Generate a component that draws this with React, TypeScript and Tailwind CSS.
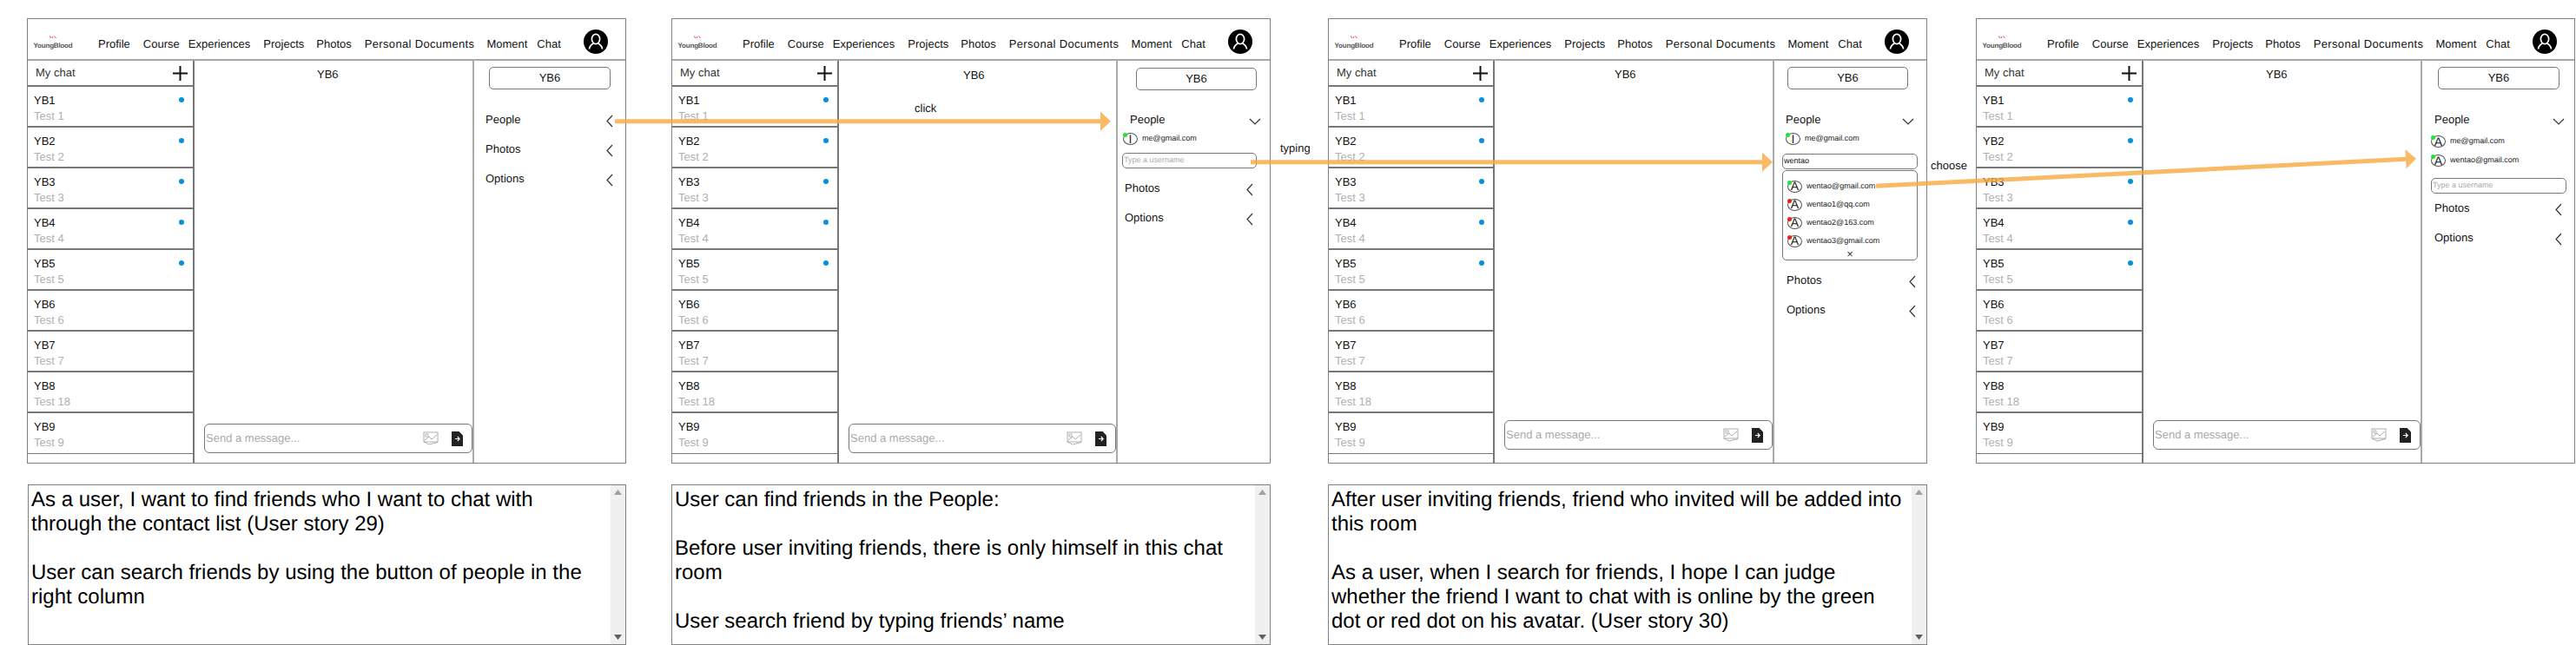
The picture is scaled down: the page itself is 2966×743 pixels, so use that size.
import React from 'react';

const chats = [
  { name: 'YB1', sub: 'Test 1', unread: true },
  { name: 'YB2', sub: 'Test 2', unread: true },
  { name: 'YB3', sub: 'Test 3', unread: true },
  { name: 'YB4', sub: 'Test 4', unread: true },
  { name: 'YB5', sub: 'Test 5', unread: true },
  { name: 'YB6', sub: 'Test 6', unread: false },
  { name: 'YB7', sub: 'Test 7', unread: false },
  { name: 'YB8', sub: 'Test 18', unread: false },
  { name: 'YB9', sub: 'Test 9', unread: false },
];

const ChevronLeft = () => (
  <svg width="8" height="15" viewBox="0 0 8 15" className="mt-[3px]">
    <polyline points="7,1 1,7.5 7,14" fill="none" stroke="#333" strokeWidth="1.2" />
  </svg>
);

const ChevronDown = () => (
  <svg width="14" height="8" viewBox="0 0 14 8" className="mt-[3px]">
    <polyline points="1,1 7,7 13,1" fill="none" stroke="#333" strokeWidth="1.2" />
  </svg>
);

const UserBadge = () => (
  <svg width="28" height="28" viewBox="0 0 28 28" className="mt-[12px] ml-[auto] mr-[20px] shrink-0">
    <circle cx="14" cy="14" r="14" fill="#000" />
    <ellipse cx="14" cy="11" rx="4.6" ry="5.6" fill="none" stroke="#fff" strokeWidth="1.7" />
    <path d="M6.5 22.5 C6.8 19 9 17.3 11.2 16 M21.5 22.5 C21.2 19 19 17.3 16.8 16" fill="none" stroke="#fff" strokeWidth="1.7" />
  </svg>
);

const ImageIcon = () => (
  <svg width="18" height="16" viewBox="0 0 18 16" className="shrink-0">
    <rect x="1" y="1" width="16" height="11" fill="#fff" stroke="#999" strokeWidth="0.8" />
    <rect x="3" y="3" width="3" height="3" fill="none" stroke="#999" strokeWidth="0.7" />
    <polyline points="2,10 7,6 10,9 16,4" fill="none" stroke="#999" strokeWidth="0.8" />
    <path d="M1 12 L7 15 L17 12.5" fill="none" stroke="#999" strokeWidth="0.8" />
  </svg>
);

const SendIcon = () => (
  <svg width="13" height="17" viewBox="0 0 13 17" className="shrink-0">
    <path d="M0 0 H8.5 L13 4.5 V17 H0 Z" fill="#222" />
    <path d="M4 8.5 H9 M6.8 6 L9.2 8.5 L6.8 11" fill="none" stroke="#fff" strokeWidth="1.1" />
  </svg>
);

const Avatar = ({ letter, status }: { letter: string; status: 'green' | 'red' }) => (
  <div className="relative w-[17px] h-[14px] shrink-0 rounded-[50%] border border-[#555] flex items-center justify-center text-[14px] leading-[13px] text-[#222]">
    {letter}
    {status === 'green' ? (
      <span className="absolute left-[-1px] top-[-1px] w-[5px] h-[5px] rounded-full bg-[#22e33a]" />
    ) : (
      <span className="absolute left-[-1px] top-[-1px] w-[5px] h-[5px] rounded-full bg-[#e0251b]" />
    )}
  </div>
);

const Section = ({ label, open, className }: { label: string; open?: boolean; className: string }) => (
  <div className={`flex justify-between items-center h-[20px] text-[13px] text-[#111] ${className}`}>
    <span>{label}</span>
    {open ? <ChevronDown /> : <ChevronLeft />}
  </div>
);

const Header = () => (
  <div className="h-[48px] border-b-2 border-[#a8a8a8] flex items-start text-[13px] leading-[16px] text-[#111]">
    <div className="ml-[7px] mt-[19px] w-[44px] flex flex-col items-center">
      <svg width="8" height="4" viewBox="0 0 8 4">
        <path d="M0.5 0.5 L1.5 3 M3 3 L4 1 M5.5 0.5 L7.5 3" stroke="#e2453c" strokeWidth="1" fill="none" />
      </svg>
      <span className="mt-[3px] text-[8px] leading-[10px] text-[#555] font-bold tracking-[-0.2px]">YoungBlood</span>
    </div>
    <div className="mt-[21px] flex">
      <span className="ml-[30px]">Profile</span>
      <span className="ml-[15px]">Course</span>
      <span className="ml-[10px]">Experiences</span>
      <span className="ml-[15px]">Projects</span>
      <span className="ml-[14px]">Photos</span>
      <span className="ml-[15px] tracking-[0.33px]">Personal Documents</span>
      <span className="ml-[14px]">Moment</span>
      <span className="ml-[11px]">Chat</span>
    </div>
    <UserBadge />
  </div>
);

const ChatList = ({ className }: { className: string }) => (
  <div className={`shrink-0 border-r-2 border-[#777] ${className}`}>
    <div className="h-[30px] border-b-2 border-[#777] flex items-center justify-between pl-[9px] pr-[6px] text-[13px] text-[#333]">
      <span>My chat</span>
      <svg width="17" height="17" viewBox="0 0 17 17">
        <path d="M0 8.5 H17 M8.5 0 V17" stroke="#111" strokeWidth="2" />
      </svg>
    </div>
    {chats.map((c, i) => (
      <div
        key={c.name}
        className={`h-[47px] border-[#777] flex justify-between pl-[7px] pr-[10px] pt-[7px] text-[13px] leading-[17px] ${i === chats.length - 1 ? 'border-b' : 'border-b-2'}`}
      >
        <div>
          <div className="text-[#111]">{c.name}</div>
          <div className="mt-[1px] text-[#b0b0b0]">{c.sub}</div>
        </div>
        {c.unread && <span className="mt-[5px] w-[6px] h-[6px] rounded-full bg-[#0a8fe0]" />}
      </div>
    ))}
  </div>
);

const Conversation = ({
  className,
  titleClass,
  inputClass,
}: {
  className: string;
  titleClass: string;
  inputClass: string;
}) => (
  <div className={`shrink-0 flex flex-col justify-between ${className}`}>
    <div className={`text-[13px] leading-[16px] text-[#111] ${titleClass}`}>YB6</div>
    <div className={`h-[34px] ml-[11px] rounded-[6px] border border-[#777] flex items-center pl-[1px] pr-[10px] text-[13px] text-[#aaa] ${inputClass}`}>
      <span className="flex-1">Send a message...</span>
      <ImageIcon />
      <div className="ml-[15px]">
        <SendIcon />
      </div>
    </div>
  </div>
);

const RoomButton = ({ className }: { className: string }) => (
  <div className={`h-[26px] rounded-[5px] border border-[#777] flex items-center justify-center text-[13px] text-[#111] ${className}`}>
    YB6
  </div>
);

const UsernameInput = ({ className, value }: { className: string; value?: string }) => (
  <div className={`h-[18px] rounded-[5px] border border-[#777] flex items-center pl-[1px] text-[9px] ${value ? 'text-[#111]' : 'text-[#aaa]'} ${className}`}>
    {value ?? 'Type a username'}
  </div>
);

const Person = ({ letter, status, email, className }: { letter: string; status: 'green' | 'red'; email: string; className: string }) => (
  <div className={`flex items-center h-[14px] text-[9px] text-[#222] ${className}`}>
    <Avatar letter={letter} status={status} />
    <span className="ml-[5px]">{email}</span>
  </div>
);

const Frame = ({ children }: { children: React.ReactNode }) => (
  <div className="h-[513px] border border-[#808080] flex flex-col">
    <Header />
    <div className="flex flex-1">{children}</div>
  </div>
);

const Panel = ({ children }: { children: React.ReactNode }) => (
  <div className="flex-1 border-l-2 border-[#aaa]">{children}</div>
);

const StoryBox = ({ lines, className }: { lines: string[]; className?: string }) => (
  <div className={`mt-[24px] h-[185px] border border-[#808080] flex ${className ?? ''}`}>
    <div className="flex-1 pl-[3px] pt-[3px] text-[24px] leading-[28px] text-black whitespace-pre">
      {lines.map((l, i) => (
        <div key={i} className="h-[28px]">{l}</div>
      ))}
    </div>
    <div className="w-[17px] bg-[#f0f0f0] flex flex-col items-center justify-between py-[5px]">
      <svg width="9" height="6" viewBox="0 0 9 6"><path d="M4.5 0 L9 6 H0 Z" fill="#a0a0a0" /></svg>
      <svg width="9" height="6" viewBox="0 0 9 6"><path d="M0 0 H9 L4.5 6 Z" fill="#606060" /></svg>
    </div>
  </div>
);

const Arrow = ({ x1, y1, x2, y2 }: { x1: number; y1: number; x2: number; y2: number }) => {
  const len = Math.hypot(x2 - x1, y2 - y1);
  const a = (Math.atan2(y2 - y1, x2 - x1) * 180) / Math.PI;
  return (
    <g transform={`translate(${x1} ${y1}) rotate(${a})`} fill="#f7a83f" fillOpacity="0.8">
      <path d={`M0 -2.5 H${len - 12} V-11 L${len} 0 L${len - 12} 11 V2.5 H0 Z`} />
    </g>
  );
};

const App = () => {
  return (
    <div className="relative w-[2966px] h-[743px] overflow-hidden bg-white font-['Liberation_Sans',Arial,sans-serif] [text-rendering:geometricPrecision]">
      <div className="flex pt-[21px]">
        <div className="ml-[31px] w-[690px] shrink-0">
          <Frame>
            <ChatList className="w-[192px]" />
            <Conversation className="w-[320px]" titleClass="pl-[141px] pt-[8px]" inputClass="mb-[11px]" />
            <Panel>
              <RoomButton className="mt-[7px] ml-[17px] w-[140px]" />
              <Section label="People" className="mt-[25px] ml-[13px] w-[147px]" />
              <Section label="Photos" className="mt-[14px] ml-[13px] w-[147px]" />
              <Section label="Options" className="mt-[14px] ml-[13px] w-[147px]" />
            </Panel>
          </Frame>
          <StoryBox
            className="ml-[1px]"
            lines={[
              'As a user, I want to find friends who I want to chat with',
              'through the contact list (User story 29)',
              '',
              'User can search friends by using the button of people in the',
              'right column',
            ]}
          />
        </div>

        <div className="ml-[52px] w-[690px] shrink-0">
          <Frame>
            <ChatList className="w-[192px]" />
            <Conversation className="w-[319px]" titleClass="pl-[143px] pt-[9px]" inputClass="mb-[11px]" />
            <Panel>
              <RoomButton className="mt-[8px] ml-[21px] w-[139px]" />
              <Section label="People" open className="mt-[24px] ml-[14px] w-[151px]" />
              <Person letter="I" status="green" email="me@gmail.com" className="mt-[5px] ml-[6px]" />
              <UsernameInput className="mt-[9px] ml-[5px] w-[155px]" />
              <Section label="Photos" className="mt-[13px] ml-[8px] w-[148px]" />
              <Section label="Options" className="mt-[14px] ml-[8px] w-[148px]" />
            </Panel>
          </Frame>
          <StoryBox
            lines={[
              'User can find friends in the People:',
              '',
              'Before user inviting friends, there is only himself in this chat',
              'room',
              '',
              'User search friend by typing friends’ name',
            ]}
          />
        </div>

        <div className="ml-[66px] w-[690px] shrink-0">
          <Frame>
            <ChatList className="w-[191px]" />
            <Conversation className="w-[320px]" titleClass="pl-[138px] pt-[8px]" inputClass="mb-[15px]" />
            <Panel>
              <RoomButton className="mt-[7px] ml-[15px] w-[139px]" />
              <Section label="People" open className="mt-[25px] ml-[13px] w-[148px]" />
              <Person letter="I" status="green" email="me@gmail.com" className="mt-[5px] ml-[13px]" />
              <UsernameInput value="wentao" className="mt-[10px] ml-[9px] w-[156px]" />
              <div className="mt-[1px] ml-[9px] w-[156px] h-[104px] rounded-[5px] border border-[#777] pt-[7px]">
                <div className="pl-[5px] h-[21px] flex items-center">
                  <Person letter="A" status="green" email="wentao@gmail.com" className="" />
                </div>
                <div className="pl-[5px] h-[21px] flex items-center">
                  <Person letter="A" status="red" email="wentao1@qq.com" className="" />
                </div>
                <div className="pl-[5px] h-[21px] flex items-center">
                  <Person letter="A" status="red" email="wentao2@163.com" className="" />
                </div>
                <div className="pl-[5px] h-[21px] flex items-center">
                  <Person letter="A" status="red" email="wentao3@gmail.com" className="" />
                </div>
                <div className="text-center text-[13px] leading-[10px] text-[#333]">×</div>
              </div>
              <Section label="Photos" className="mt-[13px] ml-[14px] w-[149px]" />
              <Section label="Options" className="mt-[14px] ml-[14px] w-[149px]" />
            </Panel>
          </Frame>
          <StoryBox
            lines={[
              'After user inviting friends, friend who invited will be added into',
              'this room',
              '',
              'As a user, when I search for friends, I hope I can judge',
              'whether the friend I want to chat with is online by the green',
              'dot or red dot on his avatar. (User story 30)',
            ]}
          />
        </div>

        <div className="ml-[56px] w-[690px] shrink-0">
          <Frame>
            <ChatList className="w-[192px]" />
            <Conversation className="w-[319px]" titleClass="pl-[141px] pt-[8px]" inputClass="mb-[15px]" />
            <Panel>
              <RoomButton className="mt-[7px] ml-[18px] w-[140px]" />
              <Section label="People" open className="mt-[25px] ml-[14px] w-[150px]" />
              <Person letter="A" status="green" email="me@gmail.com" className="mt-[8px] ml-[10px]" />
              <Person letter="A" status="green" email="wentao@gmail.com" className="mt-[8px] ml-[10px]" />
              <UsernameInput className="mt-[13px] ml-[10px] w-[156px]" />
              <Section label="Photos" className="mt-[7px] ml-[14px] w-[147px]" />
              <Section label="Options" className="mt-[14px] ml-[14px] w-[147px]" />
            </Panel>
          </Frame>
        </div>
      </div>

      {/* flow arrows and their labels, laid over the frames */}
      <svg className="absolute left-0 top-0 pointer-events-none" width="2966" height="743">
        <Arrow x1={708} y1={139.7} x2={1279} y2={139.7} />
        <Arrow x1={1440} y1={186.7} x2={2041} y2={186.7} />
        <Arrow x1={2160} y1={214.3} x2={2782} y2={182.7} />
      </svg>
      <span className="absolute left-[1053px] top-[117px] text-[13px] leading-[16px] text-[#111]">click</span>
      <span className="absolute left-[1474px] top-[163px] text-[13px] leading-[16px] text-[#111]">typing</span>
      <span className="absolute left-[2223px] top-[183px] text-[13px] leading-[16px] text-[#111]">choose</span>
    </div>
  );
};

export default App;
